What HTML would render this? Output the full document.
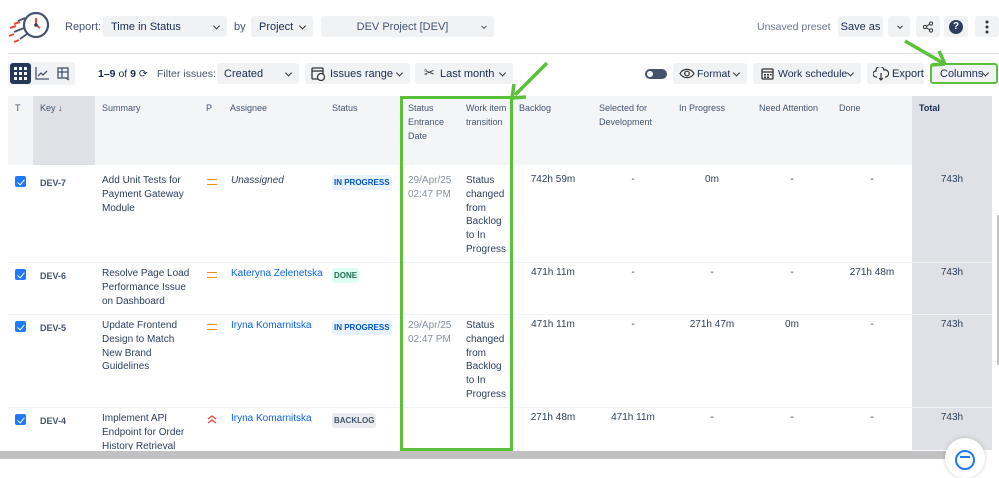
<!DOCTYPE html>
<html><head><meta charset="utf-8">
<style>
*{box-sizing:border-box;margin:0;padding:0}
body{width:999px;height:461px;overflow:hidden;background:#fff;font-family:"Liberation Sans",sans-serif;color:#172b4d;position:relative}
.a{position:absolute;white-space:nowrap}
.btn{position:absolute;background:#f1f2f4;border-radius:3px;font-size:11px;color:#172b4d;display:flex;align-items:center}
.chev{position:absolute;right:8px;top:50%;width:5px;height:5px;border-right:1.6px solid #333;border-bottom:1.6px solid #333;transform:translateY(-70%) rotate(45deg)}
.hd{position:absolute;font-size:9px;color:#44546f;line-height:14px}
.c{position:absolute;font-size:10px;line-height:13.8px;color:#2c3e5d}
.key{position:absolute;font-size:9px;font-weight:bold;color:#44546f}
.cb{position:absolute;left:15px;width:11px;height:11px;background:#1d7afc;border-radius:2px}
.cb:after{content:"";position:absolute;left:3.5px;top:1.5px;width:3px;height:6px;border-right:1.5px solid #fff;border-bottom:1.5px solid #fff;transform:rotate(40deg)}
.lz{position:absolute;font-size:8px;font-weight:bold;padding:3px 2px;border-radius:3px}
.ip{background:#e9f2ff;color:#0055cc}
.eq{position:absolute;left:207px;width:10px;height:6px;border-top:1.8px solid #f18d13;border-bottom:1.8px solid #f18d13}
.num{position:absolute;font-size:10px;color:#2c3e5d;text-align:center;width:80px}
.blue{color:#0c66e4}
.rowline{position:absolute;left:8px;width:984px;height:1px;background:#f1f2f4}
</style></head><body>
<!-- logo -->
<svg class="a" style="left:6px;top:10px" width="46" height="34" viewBox="0 0 46 34">
<circle cx="30" cy="15" r="12" fill="none" stroke="#44546f" stroke-width="2.2"/>
<path d="M30 8 L30 15 L34 18" stroke="#e5493a" stroke-width="2" fill="none"/>
<circle cx="30" cy="15" r="1.8" fill="#2c3e5d"/>
<path d="M19 8 L12 11 M18 18 L8 22 M21 24 L14 29" stroke="#44546f" stroke-width="1.8"/>
<path d="M10 16 L4 18 M8 24 L3 26 M13 30 L8 32 M14 12 L8 14" stroke="#e5493a" stroke-width="2"/>
</svg>
<div class="a" style="left:65px;top:21px;font-size:11px;color:#44546f">Report:</div>
<div class="btn" style="left:103px;top:16px;width:124px;height:21px;padding-left:8px">Time in Status<i class="chev"></i></div>
<div class="a" style="left:234px;top:21px;font-size:11px;color:#44546f">by</div>
<div class="btn" style="left:251px;top:16px;width:62px;height:21px;padding-left:8px">Project<i class="chev"></i></div>
<div class="btn" style="left:321px;top:16px;width:173px;height:21px;justify-content:center;color:#44546f;padding-right:10px">DEV Project [DEV]<i class="chev" style="border-color:#555;width:4px;height:4px"></i></div>
<div class="a" style="left:757px;top:21px;font-size:10.5px;color:#6b778c">Unsaved preset</div>
<div class="btn" style="left:838px;top:16px;width:45px;height:21px;justify-content:center">Save as</div>
<div class="btn" style="left:888px;top:16px;width:22px;height:21px"><i class="chev" style="right:8px;width:4px;height:4px"></i></div>
<div class="btn" style="left:916px;top:16px;width:24px;height:21px;justify-content:center">
<svg width="12" height="12" viewBox="0 0 12 12"><circle cx="9" cy="2.5" r="1.6" fill="none" stroke="#333"/><circle cx="9" cy="9.5" r="1.6" fill="none" stroke="#333"/><circle cx="3" cy="6" r="1.6" fill="none" stroke="#333"/><path d="M4.4 5.2L7.6 3.3M4.4 6.8L7.6 8.7" stroke="#333"/></svg></div>
<div class="btn" style="left:944px;top:16px;width:24px;height:21px;justify-content:center"><div style="width:14px;height:14px;border-radius:50%;background:#2c3e5d;color:#fff;font-size:10px;font-weight:bold;text-align:center;line-height:14px">?</div></div>
<div class="btn" style="left:975px;top:16px;width:24px;height:21px;justify-content:center"><svg width="4" height="14"><circle cx="2" cy="2" r="1.5" fill="#333"/><circle cx="2" cy="7" r="1.5" fill="#333"/><circle cx="2" cy="12" r="1.5" fill="#333"/></svg></div>
<div class="a" style="left:8px;top:53px;width:991px;height:1px;background:#dcdfe4"></div>

<!-- row 2 -->
<div class="a" style="left:8px;top:62px;width:67px;height:23px;background:#f1f2f4;border-radius:3px"></div>
<div class="a" style="left:10px;top:63px;width:21px;height:21px;background:#253858;border-radius:3px"></div>
<svg class="a" style="left:14px;top:67px" width="13" height="13"><g fill="#fff"><rect x="0" y="0" width="3" height="3"/><rect x="5" y="0" width="3" height="3"/><rect x="10" y="0" width="3" height="3"/><rect x="0" y="5" width="3" height="3"/><rect x="5" y="5" width="3" height="3"/><rect x="10" y="5" width="3" height="3"/><rect x="0" y="10" width="3" height="3"/><rect x="5" y="10" width="3" height="3"/><rect x="10" y="10" width="3" height="3"/></g></svg>
<svg class="a" style="left:35px;top:67px" width="14" height="13"><path d="M1 0V12H14M3 9L6 6L8 8L12 4" stroke="#44546f" stroke-width="1.3" fill="none"/></svg>
<svg class="a" style="left:57px;top:67px" width="14" height="14"><rect x="1" y="1" width="10" height="10" fill="none" stroke="#44546f" stroke-width="1.3"/><path d="M1 5H11M5 1V11M9 11L12 13" stroke="#44546f" stroke-width="1.3"/></svg>
<div class="a" style="left:98px;top:68px;font-size:10.5px;color:#172b4d"><b>1–9</b> of <b>9</b> ⟳</div>
<div class="a" style="left:157px;top:68px;font-size:10.5px;color:#44546f">Filter issues:</div>
<div class="btn" style="left:217px;top:63px;width:82px;height:21px;padding-left:7px">Created<i class="chev"></i></div>
<div class="btn" style="left:305px;top:63px;width:105px;height:21px;padding-left:25px">Issues range<i class="chev"></i></div>
<svg class="a" style="left:311px;top:66px" width="14" height="15"><rect x="1" y="2" width="11" height="11" rx="1" fill="none" stroke="#333" stroke-width="1.3"/><path d="M1 5H12" stroke="#333" stroke-width="1.3"/><circle cx="10" cy="11" r="3.5" fill="#fff" stroke="#333" stroke-width="1.2"/></svg>
<div class="btn" style="left:415px;top:63px;width:98px;height:21px;padding-left:25px">Last month<i class="chev"></i></div>
<div class="a" style="left:424px;top:65px;font-size:13px;color:#333">✂</div>
<div class="a" style="left:645px;top:69px;width:22px;height:10px;border-radius:5px;background:#44546f"></div>
<div class="a" style="left:647px;top:71px;width:6px;height:6px;border-radius:50%;background:#fff"></div>
<div class="btn" style="left:673px;top:63px;width:74px;height:21px;padding-left:24px;font-size:10.5px">Format<i class="chev"></i></div>
<svg class="a" style="left:679px;top:68px" width="16" height="11"><path d="M1 5.5C4 0 12 0 15 5.5C12 11 4 11 1 5.5Z" fill="none" stroke="#333" stroke-width="1.2"/><circle cx="8" cy="5.5" r="2.3" fill="none" stroke="#333" stroke-width="1.2"/></svg>
<div class="btn" style="left:753px;top:63px;width:108px;height:21px;padding-left:25px;font-size:10.5px">Work schedule<i class="chev"></i></div>
<svg class="a" style="left:761px;top:67px" width="13" height="13"><rect x="1" y="2" width="11" height="10" rx="1" fill="none" stroke="#333" stroke-width="1.3"/><path d="M1 5H12" stroke="#333" stroke-width="1.3"/><g fill="#333"><rect x="3" y="7" width="2" height="1.5"/><rect x="6" y="7" width="2" height="1.5"/><rect x="9" y="7" width="1.5" height="1.5"/><rect x="3" y="9.5" width="2" height="1.5"/><rect x="6" y="9.5" width="2" height="1.5"/></g></svg>
<div class="btn" style="left:867px;top:63px;width:57px;height:21px;padding-left:25px">Export</div>
<svg class="a" style="left:873px;top:67px" width="16" height="14"><path d="M4 10H3A3 3 0 0 1 3 4A4 4 0 0 1 11 3A3 3 0 0 1 13 10H12M8 6V13M6 11L8 13L10 11" fill="none" stroke="#333" stroke-width="1.2"/></svg>
<div class="btn" style="left:930px;top:63px;width:68px;height:21px;padding-left:8px;border:2.5px solid #5cc13a">Columns<i class="chev"></i></div>

<!-- table header -->
<div class="a" style="left:8px;top:96px;width:984px;height:69px;background:#f4f5f7"></div>
<div class="a" style="left:33px;top:96px;width:62px;height:69px;background:#dfe1e6"></div>
<div class="a" style="left:912px;top:96px;width:80px;height:354px;background:#dfe1e6"></div>
<div class="hd" style="left:15px;top:101px">T</div>
<div class="hd" style="left:40px;top:101px">Key ↓</div>
<div class="hd" style="left:102px;top:101px">Summary</div>
<div class="hd" style="left:206px;top:101px">P</div>
<div class="hd" style="left:230px;top:101px">Assignee</div>
<div class="hd" style="left:332px;top:101px">Status</div>
<div class="hd" style="left:408px;top:101px">Status<br>Entrance<br>Date</div>
<div class="hd" style="left:466px;top:101px">Work item<br>transition</div>
<div class="hd" style="left:519px;top:101px">Backlog</div>
<div class="hd" style="left:599px;top:101px">Selected for<br>Development</div>
<div class="hd" style="left:679px;top:101px">In Progress</div>
<div class="hd" style="left:759px;top:101px">Need Attention</div>
<div class="hd" style="left:839px;top:101px">Done</div>
<div class="hd" style="left:919px;top:101px;font-weight:bold;color:#172b4d">Total</div>

<div class="rowline" style="top:262px"></div>
<div class="rowline" style="top:314px"></div>
<div class="rowline" style="top:407px"></div>

<!-- DEV-7 -->
<div class="cb" style="top:176px"></div>
<div class="key" style="left:40px;top:178px">DEV-7</div>
<div class="c" style="left:102px;top:174px">Add Unit Tests for<br>Payment Gateway<br>Module</div>
<div class="eq" style="top:179px"></div>
<div class="c" style="left:231px;top:174px;font-style:italic">Unassigned</div>
<div class="lz ip" style="left:332px;top:175px">IN PROGRESS</div>
<div class="c" style="left:408px;top:174px;color:#8590a2">29/Apr/25<br>02:47 PM</div>
<div class="c" style="left:466px;top:174px">Status<br>changed<br>from<br>Backlog<br>to In<br>Progress</div>
<div class="num" style="left:513px;top:174px">742h 59m</div>
<div class="num" style="left:593px;top:174px">-</div>
<div class="num" style="left:672px;top:174px">0m</div>
<div class="num" style="left:752px;top:174px">-</div>
<div class="num" style="left:832px;top:174px">-</div>
<div class="num" style="left:912px;top:174px">743h</div>
<!-- DEV-6 -->
<div class="cb" style="top:269px"></div>
<div class="key" style="left:40px;top:271px">DEV-6</div>
<div class="c" style="left:102px;top:267px">Resolve Page Load<br>Performance Issue<br>on Dashboard</div>
<div class="eq" style="top:272px"></div>
<div class="c blue" style="left:231px;top:267px">Kateryna Zelenetska</div>
<div class="lz" style="left:332px;top:268px;background:#dcfff1;color:#216e4e">DONE</div>
<div class="num" style="left:513px;top:267px">471h 11m</div>
<div class="num" style="left:593px;top:267px">-</div>
<div class="num" style="left:672px;top:267px">-</div>
<div class="num" style="left:752px;top:267px">-</div>
<div class="num" style="left:832px;top:267px">271h 48m</div>
<div class="num" style="left:912px;top:267px">743h</div>
<!-- DEV-5 -->
<div class="cb" style="top:321px"></div>
<div class="key" style="left:40px;top:323px">DEV-5</div>
<div class="c" style="left:102px;top:319px">Update Frontend<br>Design to Match<br>New Brand<br>Guidelines</div>
<div class="eq" style="top:324px"></div>
<div class="c blue" style="left:231px;top:319px">Iryna Komarnitska</div>
<div class="lz ip" style="left:332px;top:320px">IN PROGRESS</div>
<div class="c" style="left:408px;top:319px;color:#8590a2">29/Apr/25<br>02:47 PM</div>
<div class="c" style="left:466px;top:319px">Status<br>changed<br>from<br>Backlog<br>to In<br>Progress</div>
<div class="num" style="left:513px;top:319px">471h 11m</div>
<div class="num" style="left:593px;top:319px">-</div>
<div class="num" style="left:672px;top:319px">271h 47m</div>
<div class="num" style="left:752px;top:319px">0m</div>
<div class="num" style="left:832px;top:319px">-</div>
<div class="num" style="left:912px;top:319px">743h</div>
<!-- DEV-4 -->
<div class="cb" style="top:414px"></div>
<div class="key" style="left:40px;top:416px">DEV-4</div>
<div class="c" style="left:102px;top:412px;height:38px;overflow:hidden">Implement API<br>Endpoint for Order<br>History Retrieval</div>
<svg class="a" style="left:207px;top:415px" width="10" height="9"><path d="M1 4L5 1L9 4M1 8L5 5L9 8" stroke="#e5493a" stroke-width="1.4" fill="none"/></svg>
<div class="c blue" style="left:231px;top:412px">Iryna Komarnitska</div>
<div class="lz" style="left:332px;top:413px;background:#e9ebee;color:#44546f">BACKLOG</div>
<div class="num" style="left:513px;top:412px">271h 48m</div>
<div class="num" style="left:593px;top:412px">471h 11m</div>
<div class="num" style="left:672px;top:412px">-</div>
<div class="num" style="left:752px;top:412px">-</div>
<div class="num" style="left:832px;top:412px">-</div>
<div class="num" style="left:912px;top:412px">743h</div>

<!-- green box -->
<div class="a" style="left:400px;top:96px;width:113px;height:355px;border:3px solid #5cc13a"></div>
<!-- arrows -->
<svg class="a" style="left:500px;top:55px" width="60" height="50"><path d="M47 8L15 40" stroke="#5cc13a" stroke-width="3.5"/><path d="M12 43L14 29M12 43L26 42" stroke="#5cc13a" stroke-width="3.5" fill="none"/></svg>
<svg class="a" style="left:895px;top:35px" width="60" height="35"><path d="M10 6L48 28" stroke="#5cc13a" stroke-width="3.5"/><path d="M50 29L44 16M50 29L37 30" stroke="#5cc13a" stroke-width="3.5" fill="none"/></svg>

<!-- scrollbar -->
<div class="a" style="left:0;top:451px;width:999px;height:10px;background:#fff"></div>
<div class="a" style="left:0;top:451px;width:960px;height:8px;background:#c1c1c1"></div>
<div class="a" style="left:997px;top:215px;width:2px;height:150px;background:#c1c1c1"></div>
<div class="a" style="left:945px;top:438px;width:40px;height:40px;border-radius:50%;background:#fff;box-shadow:0 0 4px rgba(0,0,0,.2)"></div>
<div class="a" style="left:955px;top:450px;width:20px;height:20px;border-radius:50%;border:2.5px solid #1d7afc"></div>
<div class="a" style="left:960px;top:456px;width:10px;height:2px;background:#1d7afc"></div>
</body></html>
